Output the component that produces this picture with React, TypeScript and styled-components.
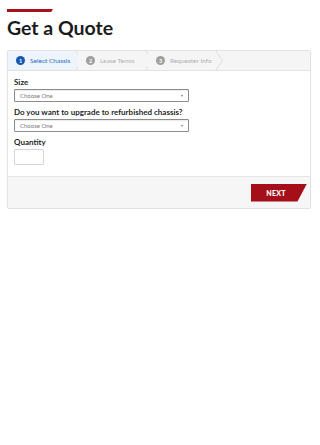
import * as React from "react";
import styled, { createGlobalStyle } from "styled-components";

const Global = createGlobalStyle`
  html, body {
    margin: 0;
    padding: 0;
    background: #fff;
  }
  body {
    font-family: "Lato", "Liberation Sans", sans-serif;
    color: #222;
  }
`;

const steps = [
  { n: 1, label: "Select Chassis" },
  { n: 2, label: "Lease Terms" },
  { n: 3, label: "Requester Info" },
];

const fields = [
  { label: "Size" },
  { label: "Do you want to upgrade to refurbished chassis?" },
];

export default function App() {
  const [active] = React.useState(1);

  return (
    <Page>
      <Global />
      <Accent />
      <Title>Get a Quote</Title>
      <Card>
        <Stepper>
          {steps.map(({ n, label }) => (
            <Step key={n}>
              <StepFill data-active={n === active}>
                <Num data-active={n === active}>{n}</Num>
                <span>{label}</span>
              </StepFill>
            </Step>
          ))}
        </Stepper>
        <Body>
          {fields.map(({ label }) => (
            <Field key={label}>
              <Label>{label}</Label>
              <Select>
                Choose One
                <Caret />
              </Select>
            </Field>
          ))}
          <Field>
            <Label>Quantity</Label>
            <Qty />
          </Field>
        </Body>
        <Footer>
          <Next>NEXT</Next>
        </Footer>
      </Card>
    </Page>
  );
}

const chevron = "polygon(0 0, 91% 0, 100% 50%, 91% 100%, 0 100%)";

const Page = styled.div`
  padding: 9px 9px 0 7px;
  display: flex;
  flex-direction: column;
`;

const Accent = styled.div`
  width: 46px;
  height: 3px;
  background: #a8101c;
  clip-path: polygon(0 0, 100% 0, 96% 100%, 0 100%);
`;

const Title = styled.h1`
  margin: 3px 0 0;
  font-size: 19.5px;
  line-height: 26px;
  font-weight: 700;
  color: #1c1c1c;
`;

const Card = styled.div`
  margin-top: 9px;
  border: 1px solid #e2e2e2;
  border-radius: 2px;
  box-shadow: 0 1px 2px rgba(0, 0, 0, 0.06);
  display: flex;
  flex-direction: column;
`;

const Stepper = styled.div`
  height: 19px;
  background: #f5f5f5;
  border-bottom: 1px solid #e2e2e2;
  display: flex;
`;

const Step = styled.div`
  width: 75px;
  margin-right: -5px;
  padding-right: 1px;
  box-sizing: border-box;
  background: #dcdcdc;
  clip-path: ${chevron};
  display: flex;
`;

const StepFill = styled.div`
  flex: 1;
  background: #f5f5f5;
  clip-path: ${chevron};
  padding-left: 8px;
  display: flex;
  align-items: center;
  gap: 5px;
  font-size: 6.5px;
  color: #b0b0b0;

  &[data-active="true"] {
    background: #edf4fb;
    color: #2a6cc0;
  }
`;

const Num = styled.span`
  width: 9px;
  height: 9px;
  border-radius: 50%;
  background: #9e9e9e;
  color: #fff;
  font-size: 5.5px;
  font-weight: 700;
  display: flex;
  align-items: center;
  justify-content: center;

  &[data-active="true"] {
    background: #1558b0;
  }
`;

const Body = styled.div`
  padding: 6px 6px 11px;
  display: flex;
  flex-direction: column;
  gap: 5px;
`;

const Field = styled.div`
  display: flex;
  flex-direction: column;
  gap: 2px;
`;

const Label = styled.div`
  font-size: 8px;
  line-height: 10px;
  font-weight: 700;
  color: #1f1f1f;
`;

const Select = styled.div`
  width: 175px;
  height: 13px;
  box-sizing: border-box;
  border: 1px solid #8c8c8c;
  border-radius: 1px;
  box-shadow: inset 0 1px 1px rgba(0, 0, 0, 0.08);
  padding: 0 5px;
  display: flex;
  align-items: center;
  justify-content: space-between;
  font-size: 6px;
  color: #777;
`;

const Caret = styled.span`
  width: 0;
  height: 0;
  border-left: 1.5px solid transparent;
  border-right: 1.5px solid transparent;
  border-top: 2px solid #777;
`;

const Qty = styled.div`
  width: 30px;
  height: 16px;
  box-sizing: border-box;
  border: 1px solid #d6d6d6;
  border-radius: 1px;
  background: #fff;
`;

const Footer = styled.div`
  height: 31px;
  background: #f6f6f6;
  border-top: 1px solid #e4e4e4;
  display: flex;
  align-items: center;
  justify-content: flex-end;
  padding-right: 3px;
`;

const Next = styled.div`
  width: 56px;
  height: 18px;
  background: #a50f1a;
  clip-path: polygon(0 0, 100% 0, 83% 100%, 0 100%);
  color: #fff;
  font-size: 7px;
  font-weight: 900;
  letter-spacing: 0.3px;
  display: flex;
  align-items: center;
  justify-content: center;
  padding-right: 6px;
  box-sizing: border-box;
`;
